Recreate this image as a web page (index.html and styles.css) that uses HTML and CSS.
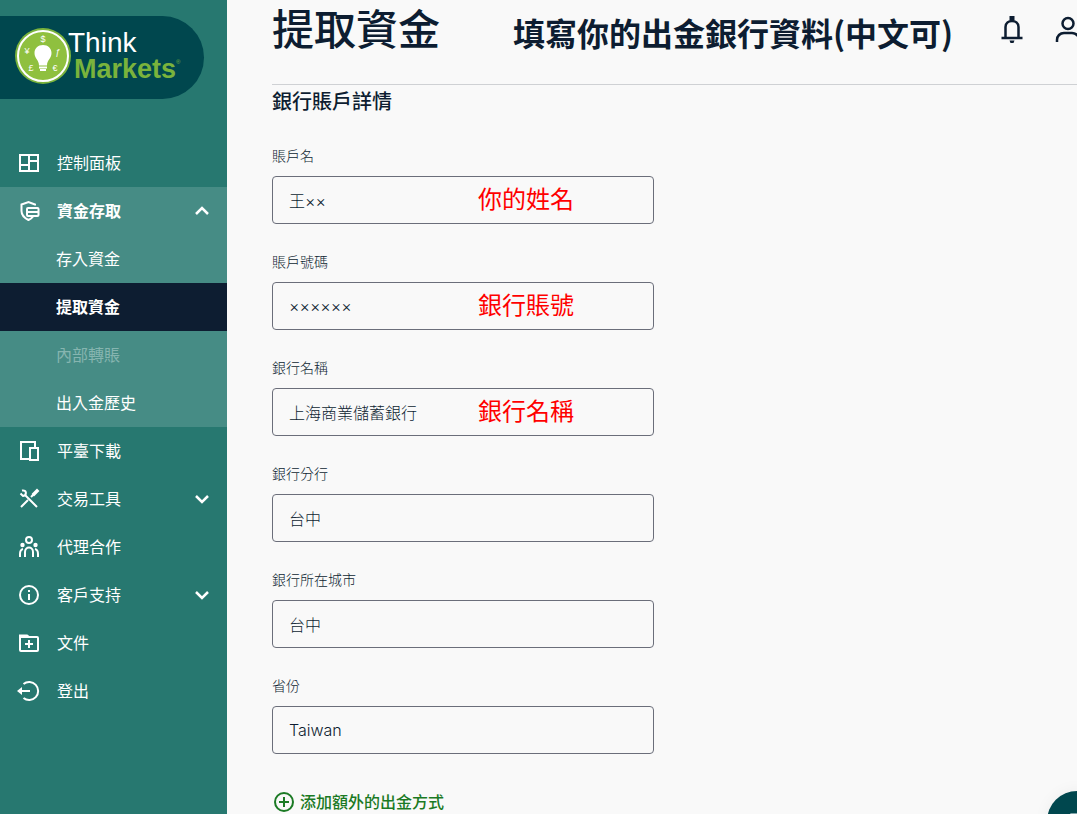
FILE: index.html
```html
<!DOCTYPE html>
<html lang="zh-Hant">
<head>
    <meta charset="UTF-8">
    <meta name="viewport" content="width=device-width, initial-scale=1">
    <title>提取資金</title>
    <link rel="stylesheet" href="styles.css">
</head>
<body>
    <div class="layout">
        <aside class="sidebar">
            <a class="logo" href="#" aria-label="ThinkMarkets">
                <svg class="logo-mark" viewBox="0 0 56 56" aria-hidden="true">
                    <circle cx="28" cy="28" r="28" fill="#7ab33c"/>
                    <circle cx="28" cy="28" r="25" fill="#8fc03f" stroke="#fff" stroke-width="2"/>
                    <path d="M28 17c-5 0-8.500 3.500-8.500 8 0 5.500 4.500 7 4.500 12.500h8c0-5.500 4.500-7 4.500-12.500 0-4.500-3.500-8-8.500-8z" fill="#fff"/>
                    <path d="M24 39.500h8M25 42h6" stroke="#fff" stroke-width="2"/>
                    <g class="logo-currency">
                        <text x="28" y="14">$</text>
                        <text x="12" y="26">¥</text>
                        <text x="43" y="27">ƒ</text>
                        <text x="16" y="43">£</text>
                        <text x="40" y="43">€</text>
                    </g>
                </svg>
                <span class="logo-text">
                    <span class="logo-think">Think</span>
                    <span class="logo-markets">Markets<sup>®</sup></span>
                </span>
            </a>

            <nav class="menu">
                <a class="menu-item" href="#">
                    <svg class="icon" viewBox="0 0 24 24"><path d="M3 4h18v16H3zM12 4v16M3 14h9M12 10h9"/></svg>
                    控制面板
                </a>
                <div class="menu-group">
                    <button class="menu-item active" type="button" aria-expanded="true">
                        <svg class="icon" viewBox="0 0 24 24"><path d="M18 6.500V5.500L11.500 3 4.500 5.500V12c0 4 3 7 7 9 2-.8 3.500-2 4.500-3.500"/><rect x="10" y="9" width="11.500" height="8" rx="1"/><path d="M10 13h11"/></svg>
                        資金存取
                        <svg class="icon chevron" viewBox="0 0 24 24"><path d="M6 15l6-6 6 6"/></svg>
                    </button>
                    <a class="sub-item" href="#">存入資金</a>
                    <a class="sub-item current" href="#" aria-current="page">提取資金</a>
                    <a class="sub-item disabled" href="#" aria-disabled="true">內部轉賬</a>
                    <a class="sub-item" href="#">出入金歷史</a>
                </div>
                <a class="menu-item" href="#">
                    <svg class="icon" viewBox="0 0 24 24"><path d="M12 20H4V3h14v5M13 9h8v12h-8z"/></svg>
                    平臺下載
                </a>
                <button class="menu-item" type="button" aria-expanded="false">
                    <svg class="icon" viewBox="0 0 24 24"><path d="M8 8l12 12M4 20l7-7M14 10l3-3"/><path d="M16 7l4-4 1 1-4 4zM5 3.500c5-1 5 5 1 5.500L3.500 6.500"/></svg>
                    交易工具
                    <svg class="icon chevron" viewBox="0 0 24 24"><path d="M6 9l6 6 6-6"/></svg>
                </button>
                <a class="menu-item" href="#">
                    <svg class="icon" viewBox="0 0 24 24"><circle cx="12" cy="5" r="3"/><circle class="solid" cx="5.500" cy="10" r="2.200"/><circle class="solid" cx="18.500" cy="10" r="2.200"/><path d="M8 22v-5c0-6 8-6 8 0v5M3 22v-3c0-3 .5-4.500 3-5M21 22v-3c0-3-.5-4.500-3-5"/></svg>
                    代理合作
                </a>
                <button class="menu-item" type="button" aria-expanded="false">
                    <svg class="icon" viewBox="0 0 24 24"><circle cx="12" cy="12" r="9"/><path d="M12 11v6M12 7v2"/></svg>
                    客戶支持
                    <svg class="icon chevron" viewBox="0 0 24 24"><path d="M6 9l6 6 6-6"/></svg>
                </button>
                <a class="menu-item" href="#">
                    <svg class="icon" viewBox="0 0 24 24"><rect x="3" y="6" width="18" height="14" rx="1"/><path d="M12 9v8M8 13h8"/><path d="M3 4.500h7l2 1.500H3z"/></svg>
                    文件
                </a>
                <a class="menu-item" href="#">
                    <svg class="icon" viewBox="0 0 24 24"><path d="M6.500 5A9 9 0 1 1 6.500 19M2 12h11"/><path class="solid" d="M0 12l5-4v8z"/></svg>
                    登出
                </a>
            </nav>
        </aside>

        <main class="main">
            <header class="header">
                <h1>提取資金</h1>
                <p class="header-note">填寫你的出金銀行資料(中文可)</p>
                <div class="header-actions">
                    <button class="icon-button" type="button" aria-label="通知">
                        <svg class="icon" viewBox="0 0 24 24"><path d="M5.500 19V9c0-8 13-8 13 0v10M1.500 20h21"/><path class="solid" d="M9.500 -2h5v4h-5zM9.500 22.500h5l-1 2.500h-3z"/></svg>
                    </button>
                    <button class="icon-button" type="button" aria-label="帳戶">
                        <svg class="icon" viewBox="0 0 24 24"><circle cx="12" cy="5.500" r="5.500"/><path d="M1 24v-2c0-4 3-7 7-7h8c4 0 7 3 7 7v2"/></svg>
                    </button>
                </div>
            </header>

            <form class="bank-form">
                <h2>銀行賬戶詳情</h2>

                <div class="field">
                    <label for="accountName">賬戶名</label>
                    <div class="control">
                        <input type="text" id="accountName" value="王××">
                        <span class="hint">你的姓名</span>
                    </div>
                </div>

                <div class="field">
                    <label for="accountNumber">賬戶號碼</label>
                    <div class="control">
                        <input type="text" id="accountNumber" value="××××××">
                        <span class="hint">銀行賬號</span>
                    </div>
                </div>

                <div class="field">
                    <label for="bankName">銀行名稱</label>
                    <div class="control">
                        <input type="text" id="bankName" value="上海商業儲蓄銀行">
                        <span class="hint">銀行名稱</span>
                    </div>
                </div>

                <div class="field">
                    <label for="bankBranch">銀行分行</label>
                    <input type="text" id="bankBranch" value="台中">
                </div>

                <div class="field">
                    <label for="bankCity">銀行所在城市</label>
                    <input type="text" id="bankCity" value="台中">
                </div>

                <div class="field">
                    <label for="province">省份</label>
                    <input type="text" id="province" value="Taiwan">
                </div>

                <button class="add-method" type="button">
                    <svg class="icon" viewBox="0 0 24 24"><circle cx="12" cy="12" r="9"/><path d="M12 7v10M7 12h10"/></svg>
                    添加額外的出金方式
                </button>
            </form>
        </main>
    </div>

    <button class="chat-button" type="button" aria-label="聊天">
        <svg viewBox="0 0 24 24" aria-hidden="true"><path d="M4 3h16v14h-8l-5 4v-4H4z"/></svg>
    </button>
</body>
</html>
```
FILE: styles.css
```css
* {
    box-sizing: border-box;
}

body {
    margin: 0;
    font-family: Inter, "Noto Sans CJK TC", sans-serif;
    font-size: 16px;
    line-height: 24px;
    color: #0d1d31;
    background-color: #f9f9f9;
}

button {
    font: inherit;
    color: inherit;
    background: none;
    border: none;
    padding: 0;
    cursor: pointer;
}

.layout {
    display: flex;
    min-height: 100vh;
}

.icon {
    width: 24px;
    height: 24px;
    flex: none;
    fill: none;
    stroke: currentColor;
    stroke-width: 2;
    overflow: visible;
}

.icon .solid {
    fill: currentColor;
    stroke: none;
}

/* Sidebar */
.sidebar {
    flex: none;
    width: 227px;
    padding-top: 16px;
    color: white;
    background-color: #277870;
}

.logo {
    display: flex;
    align-items: center;
    width: 204px;
    height: 83px;
    margin-bottom: 40px;
    padding: 0 0 3px 15px;
    border-radius: 0 42px 42px 0;
    background-color: #00474e;
    text-decoration: none;
}

.logo-mark {
    flex: none;
    width: 56px;
    height: 56px;
}

.logo-currency {
    fill: white;
    font-family: "Liberation Sans", sans-serif;
    font-size: 9px;
    text-anchor: middle;
}

.logo-text {
    display: flex;
    flex-direction: column;
    margin-left: -3px;
    font-family: "Liberation Sans", Arial, sans-serif;
    font-size: 28px;
    line-height: 26px;
}

.logo-think {
    color: white;
}

.logo-markets {
    padding-left: 6px;
    font-size: 27px;
    font-weight: bold;
    color: #7ab33c;
}

.logo-markets sup {
    font-size: 6px;
    font-weight: normal;
    line-height: 0;
    vertical-align: 14px;
}

.menu-item,
.sub-item {
    display: flex;
    align-items: center;
    width: 100%;
    height: 48px;
    color: white;
    text-align: left;
    text-decoration: none;
}

.menu-item {
    gap: 16px;
    padding: 0 13px 0 17px;
}

.sub-item {
    padding-left: 56px;
}

.menu-group {
    background-color: #468c85;
}

.active,
.current {
    font-weight: bold;
}

.current {
    background-color: #0d1d31;
}

.disabled {
    color: #86b5b0;
}

.chevron {
    margin-left: auto;
    stroke-width: 2.5;
}

/* Content */
.main {
    flex: 1;
    min-width: 0;
    padding-left: 45px;
    overflow: hidden;
}

.header {
    display: flex;
    align-items: center;
    height: 85px;
    margin-right: -3px;
    padding-bottom: 24px;
    border-bottom: 1px solid #cfd1d4;
    white-space: nowrap;
}

h1 {
    margin: 0;
    font-size: 42px;
    font-weight: 500;
    line-height: 60px;
}

.header-note {
    margin: 0 0 0 73px;
    padding-top: 4px;
    font-family: "Noto Sans CJK TC", sans-serif;
    font-size: 32px;
    font-weight: bold;
    line-height: 48px;
}

.header-actions {
    display: flex;
    gap: 32px;
    margin-left: auto;
}

.icon-button {
    display: flex;
}

.icon-button .icon {
    stroke-width: 2.5;
}

.bank-form {
    max-width: 382px;
}

h2 {
    margin: 0 0 28px;
    padding-top: 1px;
    font-size: 20px;
    font-weight: 500;
    line-height: 32px;
}

.field {
    margin-bottom: 28px;
}

.field label {
    display: block;
    margin-bottom: 10px;
    font-size: 14px;
    font-weight: 300;
    line-height: 20px;
}

.control {
    position: relative;
}

input {
    display: block;
    width: 100%;
    height: 48px;
    padding: 0 16px;
    border: 1px solid #6b6e7a;
    border-radius: 4px;
    font: inherit;
    font-weight: 300;
    color: inherit;
    background: none;
}

.hint {
    position: absolute;
    top: 6px;
    left: 206px;
    font-size: 24px;
    line-height: 36px;
    color: #ff0000;
    pointer-events: none;
}

.add-method {
    display: flex;
    align-items: center;
    gap: 4px;
    margin-top: 36px;
    font-weight: 500;
    color: #1b7a24;
}

.chat-button {
    position: fixed;
    right: -30px;
    bottom: -37px;
    display: flex;
    align-items: center;
    justify-content: center;
    width: 60px;
    height: 60px;
    border-radius: 50%;
    background-color: #00474e;
    box-shadow: 0 0 16px rgba(0,0,0,0.05);
}

.chat-button svg {
    width: 20px;
    height: 20px;
    fill: white;
}
```
